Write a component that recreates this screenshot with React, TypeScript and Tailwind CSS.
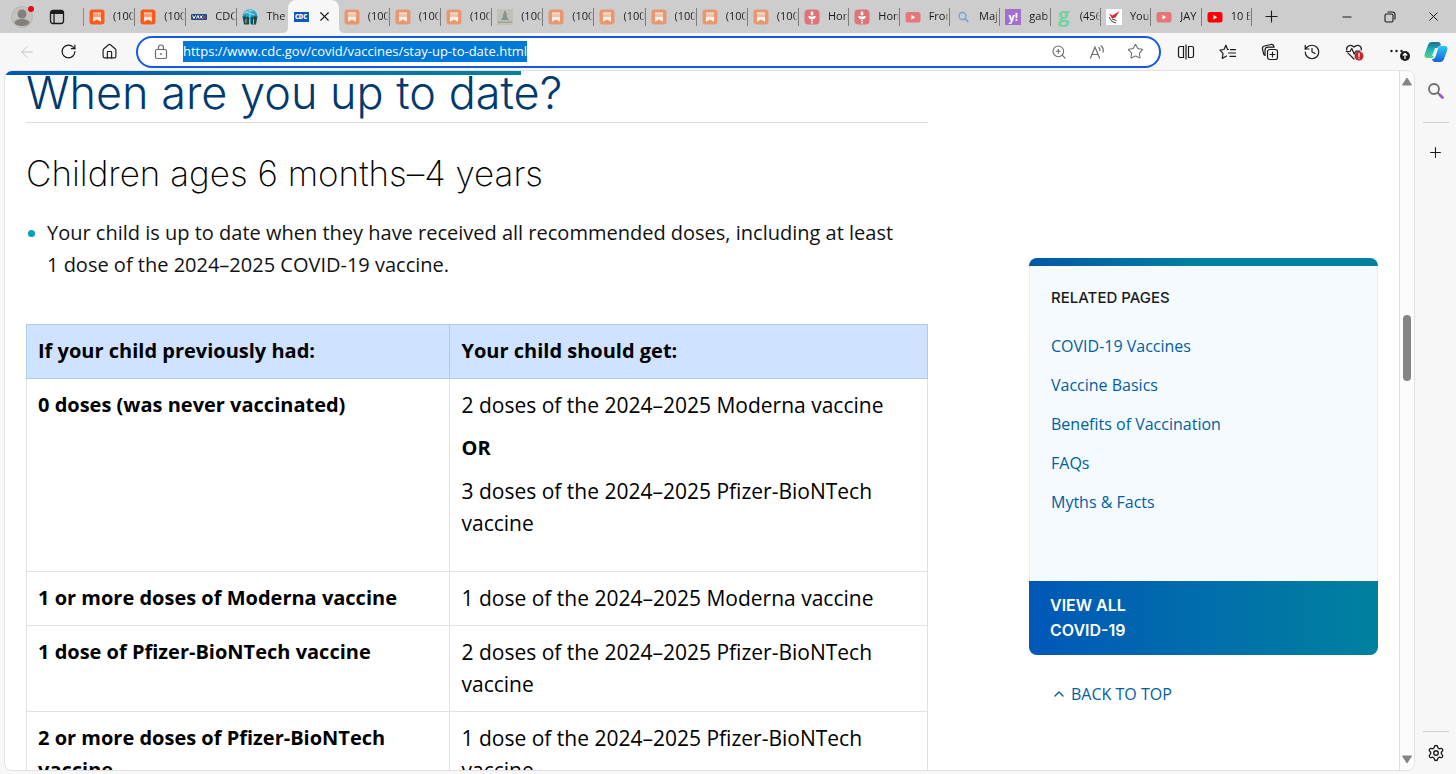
import React, { useEffect, useRef } from 'react';
import {
  ArrowLeft,
  ChevronUp,
  History,
  House,
  Minus,
  Plus,
  RotateCw,
  Settings,
  Star,
  X,
  ZoomIn,
} from 'lucide-react';

const Substack = ({ color }: { color: string }) => (
  <svg width="16" height="16" viewBox="0 0 16 16">
    <rect x="0.5" y="0.5" width="15" height="15" rx="3" fill={color} />
    <path d="M4 3.4h8v1.3H4zM4 5.5h8v1.1H4zM4 7.4h8v5.4L8 10.5l-4 2.3z" fill="white" fillOpacity="0.85" />
  </svg>
);

const VaxLogo = () => (
  <svg width="16" height="16" viewBox="0 0 16 16">
    <rect y="5" width="16" height="6" rx="1" fill="#24477c" />
    <path d="M1.5 6.5l1.5 3 1.5-3M5.5 9.5l1.3-3 1.3 3M9 6.5l2.4 3M11.4 6.5L9 9.5" stroke="white" strokeWidth="1" fill="none" />
    <path d="M12.5 6.5l2 3M14.5 6.5l-2 3" stroke="#e0453a" strokeWidth="1" />
  </svg>
);

const GlobeLogo = () => (
  <svg width="16" height="16" viewBox="0 0 16 16">
    <circle cx="8" cy="7.5" r="7.3" fill="#2aa3c9" />
    <path d="M2 5c2-3 6-4 9-3M8 1v7M3 3l10 3" stroke="#9adcf0" strokeWidth="1" fill="none" />
    <path d="M0.5 7l1.5 1 1-2 1.5 3 1-2 1.5 2v6.5H2zM9 9l1-2 1.5 2 1-3 1.5 2 1.5-1-1.5 8.5H9z" fill="#1e4a4a" />
    <path d="M4 10v4M11.5 10v5M7.5 10v5" stroke="#d3b463" strokeWidth="1" />
  </svg>
);

const Monument = () => (
  <svg width="16" height="16" viewBox="0 0 16 16">
    <rect width="16" height="16" fill="#bfc1b6" />
    <path d="M7 2h2v2l1 1v3l2 3H4l2-3V5l1-1z" fill="#8b9691" />
    <path d="M1 12.5h14V14H1z" fill="#a3a58c" />
    <path d="M5 11l3-3 3 3" stroke="#708f9d" fill="none" />
  </svg>
);

const Torch = () => (
  <svg width="16" height="16" viewBox="0 0 16 16">
    <rect x="0.5" y="0.5" width="15" height="15" rx="4" fill="#dd7477" />
    <path d="M8 2c2 1.8 1.8 4 0 4.6-1.8-.6-2-2.8 0-4.6zM4.3 7h1.6c.8.8 3.4.8 4.2 0h1.6c0 2-1.3 3-2.7 3.2H7C5.6 10 4.3 9 4.3 7zM7 11h2v1H7zM7.2 12.7h1.6v1.8H7.2z" fill="white" />
  </svg>
);

const YouTube = ({ color }: { color: string }) => (
  <svg width="16" height="16" viewBox="0 0 16 16">
    <rect x="0.5" y="3" width="15" height="10.5" rx="2.5" fill={color} />
    <path d="M6.5 6v4.4L10.2 8.2z" fill="white" />
  </svg>
);

const SearchFavicon = () => (
  <svg width="16" height="16" viewBox="0 0 16 16" fill="none" stroke="#6fa3dc" strokeWidth="1.3">
    <circle cx="7.5" cy="7" r="3.5" />
    <path d="M10 9.6l3.2 3.4" strokeWidth="1.7" />
  </svg>
);

const Yahoo = () => (
  <span className="flex size-4 items-center justify-center bg-[#a06fd0] text-[11px] leading-none font-bold text-white">y!</span>
);

const GLogo = () => (
  <span className="flex size-4 items-center justify-center pb-1 text-[20px] leading-none font-bold text-[#71d3a0]">g</span>
);

const RedBird = () => (
  <svg width="16" height="16" viewBox="0 0 16 16">
    <rect width="16" height="16" fill="white" />
    <path d="M3 4.5l3.5 2L13.5 2 9.5 8.5 6 9.5z" fill="#df2930" />
    <path d="M3 8l3 4.5 4 1.5M6 10l4.5 1.5" stroke="#42454a" strokeWidth="1" fill="none" />
  </svg>
);

const CdcLogo = () => (
  <span className="flex h-[10px] w-[15px] items-center justify-center bg-[#1155b8] text-[6px] leading-none font-extrabold text-white">CDC</span>
);

interface TabItem {
  icon: React.ReactNode;
  label: string;
}

const fadedSubstack = { icon: <Substack color="#e8976f" />, label: '(100' };

const leftTabs: TabItem[] = [
  { icon: <Substack color="#fc5a1b" />, label: '(100' },
  { icon: <Substack color="#fc5a1b" />, label: '(100' },
  { icon: <VaxLogo />, label: 'CDC' },
  { icon: <GlobeLogo />, label: 'The' },
];

const middleTabs: TabItem[] = [
  fadedSubstack,
  fadedSubstack,
  fadedSubstack,
  { icon: <Monument />, label: '(100' },
  fadedSubstack,
  fadedSubstack,
  fadedSubstack,
  fadedSubstack,
  fadedSubstack,
];

const rightTabs: TabItem[] = [
  { icon: <Torch />, label: 'Hom' },
  { icon: <Torch />, label: 'Hom' },
  { icon: <YouTube color="#e3777a" />, label: 'From' },
  { icon: <SearchFavicon />, label: 'Maj' },
  { icon: <Yahoo />, label: 'gab' },
  { icon: <GLogo />, label: '(456' },
  { icon: <RedBird />, label: 'You' },
  { icon: <YouTube color="#e3777a" />, label: 'JAY' },
  { icon: <YouTube color="#fb0007" />, label: '10 B' },
];

const Tab = ({ icon, label, last }: TabItem & { last?: boolean }) => (
  <button className={`flex h-[18px] min-w-0 flex-1 basis-0 items-center gap-2 pl-[5px] text-[#1b1b1b] ${last ? '' : 'border-r border-[#7d7d7d]'}`}>
    <span className="shrink-0">{icon}</span>
    <span className="min-w-0 flex-1 overflow-hidden [mask-image:linear-gradient(to_right,black_80%,transparent)] text-left whitespace-nowrap">{label}</span>
  </button>
);

const TabStrip = () => (
  <header className="flex h-[33px] shrink-0 items-center bg-[#cdcdcd] text-[11px]">
    <div className="flex w-[84px] shrink-0 items-center">
      <button aria-label="Profile" className="relative ml-[11px]">
        <svg width="22" height="22" viewBox="0 0 22 22">
          <circle cx="11" cy="11" r="10.5" fill="#c5c2be" stroke="#b8b5b1" />
          <circle cx="11" cy="8" r="4.5" fill="#827f7c" />
          <ellipse cx="11" cy="16.5" rx="7.5" ry="3.5" fill="#827f7c" />
        </svg>
        <span className="absolute top-0 -right-px size-[6px] rounded-full bg-[#dc0d15]" />
      </button>
      <button aria-label="Tab actions" className="ml-4">
        <svg width="16" height="16" viewBox="0 0 16 16" fill="none" stroke="#1b1b1b" strokeWidth="1.3">
          <rect x="1.5" y="1.5" width="13" height="13" rx="2.5" />
          <path d="M2 3.5h12" strokeWidth="3" />
          <path d="M5 5v9" />
        </svg>
      </button>
      <span className="ml-auto h-[18px] w-px bg-[#8a8a8a]" />
    </div>
    <nav aria-label="Tabs" className="flex min-w-0 flex-1 items-center">
      <div className="flex min-w-0 grow-[715] basis-0 items-center">
        {leftTabs.map((tab, index) => (
          <Tab key={`left-${index}`} {...tab} last={index === leftTabs.length - 1} />
        ))}
        <div className="relative flex h-[33px] min-w-0 flex-1 basis-0 items-center gap-2 rounded-t-lg bg-[#f7f7f7] pl-[6px]">
          <svg className="absolute bottom-0 -left-[6px]" width="6" height="6"><path d="M6 0v6H0c4 0 6-2 6-6z" fill="#f7f7f7" /></svg>
          <svg className="absolute -right-[6px] bottom-0" width="6" height="6"><path d="M0 0v6h6C2 6 0 4 0 0z" fill="#f7f7f7" /></svg>
          <CdcLogo />
          <button aria-label="Close tab"><X size={15} strokeWidth={1.8} color="#1b1b1b" /></button>
        </div>
        {middleTabs.map((tab, index) => (
          <Tab key={`middle-${index}`} {...tab} />
        ))}
      </div>
      <div className="flex min-w-0 grow-[453] basis-0 items-center">
        {rightTabs.map((tab, index) => (
          <Tab key={`right-${index}`} {...tab} />
        ))}
      </div>
    </nav>
    <div className="flex w-[204px] shrink-0 items-center pl-[10px] text-[#1b1b1b]">
      <button aria-label="New tab"><Plus size={19} strokeWidth={1.4} /></button>
      <div className="ml-auto flex items-center gap-[30px] pr-[15px]">
        <button aria-label="Minimize"><Minus size={14} strokeWidth={1.8} /></button>
        <button aria-label="Restore">
          <svg width="12" height="12" viewBox="0 0 12 12" fill="none" stroke="currentColor" strokeWidth="1.1">
            <rect x="1" y="3" width="8" height="8" rx="1.5" />
            <path d="M3.5 1h5A2.5 2.5 0 0 1 11 3.5v5" />
          </svg>
        </button>
        <button aria-label="Close window"><X size={15} strokeWidth={1.6} /></button>
      </div>
    </div>
  </header>
);

const SplitIcon = () => (
  <svg width="18" height="18" viewBox="0 0 18 18" fill="none" stroke="currentColor" strokeWidth="1.2">
    <path d="M6.5 3.5H3.2A1.7 1.7 0 0 0 1.5 5.2v7.6a1.7 1.7 0 0 0 1.7 1.7h3.3zM11.5 3.5h3.3a1.7 1.7 0 0 1 1.7 1.7v7.6a1.7 1.7 0 0 1-1.7 1.7h-3.3zM9 1.5v15" />
  </svg>
);

const FavoritesIcon = () => (
  <svg width="18" height="18" viewBox="0 0 18 18" fill="none" stroke="currentColor" strokeWidth="1.2" strokeLinejoin="round" strokeLinecap="round">
    <path d="M9.5 6.5H8.6L6.9 2.2 5 6.5l-4 .6 3 3.3L3.3 15.5l4.2-2.4M11.5 6.7h5M9.5 10h7M11 13.3h5.5" />
  </svg>
);

const CollectionsIcon = () => (
  <svg width="18" height="18" viewBox="0 0 18 18" fill="none" stroke="currentColor" strokeWidth="1.2" strokeLinecap="round">
    <rect x="6.5" y="6.5" width="10" height="10" rx="2.2" />
    <path d="M11.5 9v5M9 11.5h5M4 12.5a2.5 2.5 0 0 1-1.4-1.7L1.5 6a2.5 2.5 0 0 1 1.9-3l6.500-1.500c1.500-.3 2.500.4 2.900 1.700l.2.9M4 12.500V7a3 3 0 0 1 3-2.800h6" />
  </svg>
);

const HealthIcon = () => (
  <svg width="20" height="18" viewBox="0 0 20 18" fill="none" stroke="currentColor" strokeWidth="1.2" strokeLinejoin="round" strokeLinecap="round">
    <path d="M9 16L2.8 9.8M1.7 7C1 3 5.5.5 9 4c3.5-3.5 8-1 7.3 3M1.2 8.5H5L6.8 5.500 9.200 11l1.600-2.800h4" />
    <circle cx="14" cy="13" r="4.5" fill="#c4262e" stroke="none" />
    <path d="M14 10.5v3M14 15.3v.1" stroke="white" strokeWidth="1.3" />
  </svg>
);

const MoreIcon = () => (
  <svg width="22" height="18" viewBox="0 0 22 18">
    <g fill="#1b1b1b">
      <circle cx="2.5" cy="8" r="1.2" />
      <circle cx="7.5" cy="8" r="1.2" />
      <circle cx="12.5" cy="8" r="1.2" />
      <circle cx="16" cy="13" r="5" />
    </g>
    <path d="M16 16v-5.5M13.8 12.5l2.2-2.2 2.2 2.2" stroke="white" strokeWidth="1.3" fill="none" />
  </svg>
);

const CopilotIcon = () => (
  <svg width="24" height="22" viewBox="0 0 24 22">
    <defs>
      <linearGradient id="copilot-a" x1="0" y1="0" x2="0" y2="1">
        <stop offset="0" stopColor="#17708e" />
        <stop offset="0.5" stopColor="#20b2b5" />
        <stop offset="1" stopColor="#52d68c" />
      </linearGradient>
      <linearGradient id="copilot-b" x1="0" y1="0" x2="0" y2="1">
        <stop offset="0" stopColor="#30c6f4" />
        <stop offset="1" stopColor="#1264d8" />
      </linearGradient>
    </defs>
    <path d="M8 1h6c2 0 2.5 1.5 3 3l-3 2-4 9c-.6 1.5-1.5 2-3 2H3c-2 0-3-1.5-2.3-4L4 4c.7-2 2-3 4-3z" fill="url(#copilot-a)" />
    <path d="M16.5 5H21c2 0 3 1.5 2.3 4L20 18c-.7 2-2 3-4 3h-5c-2 0-2.5-1.5-3-3 2 0 2.8-.8 3.5-2.5L14.3 7c.4-1.4 1-2 2.2-2z" fill="url(#copilot-b)" />
    <path d="M11 7h3l-3 8H8z" fill="white" fillOpacity="0.85" />
  </svg>
);

const AddressBar = () => {
  const input = useRef<HTMLInputElement>(null);

  useEffect(() => {
    input.current?.focus();
    input.current?.select();
  }, []);

  return (
    <div className="flex h-8 min-w-0 flex-1 items-center rounded-full border-2 border-[#1558e6] bg-white px-[15px] text-[#6b6b6b]">
      <svg width="16" height="16" viewBox="0 0 16 16" fill="none" stroke="currentColor" strokeWidth="1.2">
        <rect x="2.5" y="5.5" width="11" height="9" rx="1.5" />
        <path d="M5.5 5.5V3.5a2.5 2.5 0 0 1 5 0v2" />
        <circle cx="8" cy="10" r="0.9" fill="currentColor" stroke="none" />
      </svg>
      <input
        ref={input}
        aria-label="Address"
        className="ml-[14px] h-[21px] min-w-0 flex-1 text-[13px] leading-[21px] text-[#1b1b1b] outline-none selection:bg-[#0078d7] selection:text-white"
        defaultValue="https://www.cdc.gov/covid/vaccines/stay-up-to-date.html"
      />
      <div className="flex items-center gap-[22px]">
        <button aria-label="Zoom"><ZoomIn size={16} strokeWidth={1.6} /></button>
        <button aria-label="Read aloud">
          <svg width="16" height="16" viewBox="0 0 16 16" fill="none" stroke="currentColor" strokeWidth="1.2" strokeLinecap="round">
            <path d="M1.5 14L6 3l4.5 11M3 10.5h6M9.8 3.5c1 .8 1.3 2 1 3.2M12 1.8c2 1.6 2.7 4 2 6.4" />
          </svg>
        </button>
        <button aria-label="Add to favorites"><Star size={17} strokeWidth={1.5} /></button>
      </div>
    </div>
  );
};

const Toolbar = () => (
  <div className="flex h-[37px] shrink-0 items-center bg-[#f7f7f7] pr-2 pl-[18px] text-[#1b1b1b]">
    <div className="flex items-center gap-6 pr-[18px]">
      <button aria-label="Back"><ArrowLeft size={18} strokeWidth={1.2} color="#bdbdbd" /></button>
      <button aria-label="Refresh"><RotateCw size={17} strokeWidth={1.7} /></button>
      <button aria-label="Home"><House size={17} strokeWidth={1.6} /></button>
    </div>
    <AddressBar />
    <div className="flex items-center gap-6 pl-4">
      <button aria-label="Split screen"><SplitIcon /></button>
      <button aria-label="Favorites"><FavoritesIcon /></button>
      <button aria-label="Collections"><CollectionsIcon /></button>
      <button aria-label="History"><History size={18} strokeWidth={1.6} /></button>
      <button aria-label="Browser essentials"><HealthIcon /></button>
      <button aria-label="Settings and more"><MoreIcon /></button>
    </div>
    <button aria-label="Copilot" className="ml-[13px]"><CopilotIcon /></button>
  </div>
);

const rows = [
  { had: '1 or more doses of Moderna vaccine', get: '1 dose of the 2024–2025 Moderna vaccine' },
  { had: '1 dose of Pfizer-BioNTech vaccine', get: '2 doses of the 2024–2025 Pfizer-BioNTech vaccine' },
  { had: '2 or more doses of Pfizer-BioNTech vaccine', get: '1 dose of the 2024–2025 Pfizer-BioNTech vaccine' },
];

const DoseTable = () => (
  <table className="mt-[43px] w-full table-fixed border-collapse text-left text-[21px] text-black">
    <thead className="text-[20px]">
      <tr className="bg-[#cfe2ff]">
        <th className="w-[47%] border border-[#b0cbef] px-[11px] pt-[10px] pb-[11px] font-bold">If your child previously had:</th>
        <th className="border border-[#b0cbef] px-[11px] pt-[10px] pb-[11px] font-bold">Your child should get:</th>
      </tr>
    </thead>
    <tbody className="align-top">
      <tr>
        <th className="border border-[#dee2e6] px-[11px] pt-[10px] pb-[11px] text-[20px] font-bold">0 doses (was never vaccinated)</th>
        <td className="border border-[#dee2e6] px-[11px] pt-[10px] pb-8">
          <p>2 doses of the 2024–2025 Moderna vaccine</p>
          <p className="mt-[11px] text-[20px] font-bold">OR</p>
          <p className="mt-[11px]">3 doses of the 2024–2025 Pfizer-BioNTech vaccine</p>
        </td>
      </tr>
      {rows.map((row) => (
        <tr key={row.had}>
          <th className="border border-[#dee2e6] px-[11px] pt-[10px] pb-[11px] text-[20px] font-bold">{row.had}</th>
          <td className="border border-[#dee2e6] px-[11px] pt-[10px] pb-[11px]">{row.get}</td>
        </tr>
      ))}
    </tbody>
  </table>
);

const related = ['COVID-19 Vaccines', 'Vaccine Basics', 'Benefits of Vaccination', 'FAQs', 'Myths & Facts'];

const RelatedPages = () => (
  <aside className="w-[349px] shrink-0 pt-[187px] font-['Open_Sans',sans-serif] text-[16px] leading-6 text-[#005ea2]">
    <div className="h-2 rounded-t-lg bg-linear-to-r from-[#0057a6] to-[#0081a1] to-50%" />
    <div className="border-x border-[#e3eef9] bg-[#f5faff] px-[21px] pt-5 pb-[67px]">
      <h4 className="font-['Inter',sans-serif] text-[15px] font-medium text-[#1b1b1b]">RELATED PAGES</h4>
      <ul className="mt-6 flex flex-col gap-[15px]">
        {related.map((label) => (
          <li key={label}>
            <a href="#">{label}</a>
          </li>
        ))}
      </ul>
    </div>
    <a href="#" className="block rounded-b-lg bg-linear-to-r from-[#0057b7] to-[#00819e] px-[21px] py-3 font-['Inter',sans-serif] leading-[25px] font-semibold text-white">
      VIEW ALL
      <br />
      COVID-19
    </a>
    <a href="#" className="mt-[27px] ml-[22px] flex items-center gap-1">
      <ChevronUp size={16} strokeWidth={2} />
      BACK TO TOP
    </a>
  </aside>
);

const Page = () => (
  <div className="relative flex min-w-0 flex-1 overflow-hidden rounded-lg border border-[#e2e2e2] bg-white">
    <div className="relative flex min-w-0 flex-1 items-start gap-[101px] overflow-hidden px-[21px]">
      <div className="absolute top-0 left-0 h-1 w-[37%] bg-linear-to-r from-[#0057b7] to-[#00819e]" />
      <main className="min-w-0 flex-1 font-['Open_Sans',sans-serif] text-[20px] leading-8 text-[#111]">
        <h2 className="border-b border-[#dcdcdc] pb-[7px] font-['Inter',sans-serif] text-[45px] leading-[44px] font-light text-[#003a70]">When are you up to date?</h2>
        <h3 className="mt-[30px] font-['Inter',sans-serif] text-[35px] leading-10 font-extralight text-black">Children ages 6 months–4 years</h3>
        <ul className="mt-6">
          <li className="flex">
            <span className="mt-[13px] mr-3 ml-[2px] size-[7px] shrink-0 rounded-full bg-[#009ec1]" />
            <span>Your child is up to date when they have received all recommended doses, including at least 1&nbsp;dose of the 2024–2025 COVID-19 vaccine.</span>
          </li>
        </ul>
        <DoseTable />
      </main>
      <RelatedPages />
    </div>
    <div className="flex w-[15px] shrink-0 flex-col items-center border-l border-[#e0e0e0] bg-[#fcfcfc] py-[6px]">
      <svg width="10" height="9" viewBox="0 0 10 9"><path d="M5 1l4.5 7h-9z" fill="#858585" stroke="#858585" strokeLinejoin="round" /></svg>
      <div className="flex w-full flex-1 flex-col items-center">
        <span className="grow-[229]" />
        <span className="w-2 grow-[66] rounded-full bg-[#858585]" />
        <span className="grow-[373]" />
      </div>
      <svg width="10" height="9" viewBox="0 0 10 9"><path d="M5 8l4.5-7h-9z" fill="#858585" stroke="#858585" strokeLinejoin="round" /></svg>
    </div>
  </div>
);

const Sidebar = () => (
  <div className="flex w-[41px] shrink-0 flex-col items-center text-[#1b1b1b]">
    <button aria-label="Search" className="mt-3">
      <svg width="18" height="18" viewBox="0 0 18 18" fill="none" strokeLinecap="round">
        <circle cx="7" cy="7" r="5" stroke="#6e6e6e" strokeWidth="1.8" />
        <path d="M11 11l1.5 1.5" stroke="#6e6e6e" strokeWidth="2" />
        <path d="M13 13l2.5 2.5" stroke="#9654e0" strokeWidth="2.8" />
      </svg>
    </button>
    <hr className="mt-[22px] w-[26px] border-[#cfcfcf]" />
    <button aria-label="Customize" className="mt-[21px]"><Plus size={17} strokeWidth={1.5} /></button>
    <hr className="mt-auto w-[26px] border-[#cfcfcf]" />
    <button aria-label="Settings" className="mt-3 mb-[9px]"><Settings size={18} strokeWidth={1.8} /></button>
  </div>
);

export default function App() {
  return (
    <div className="flex h-screen flex-col overflow-hidden bg-[#f7f7f7] font-['Open_Sans',sans-serif]">
      <TabStrip />
      <Toolbar />
      <div className="flex min-h-0 flex-1 pb-[3px] pl-1">
        <Page />
        <Sidebar />
      </div>
    </div>
  );
}
